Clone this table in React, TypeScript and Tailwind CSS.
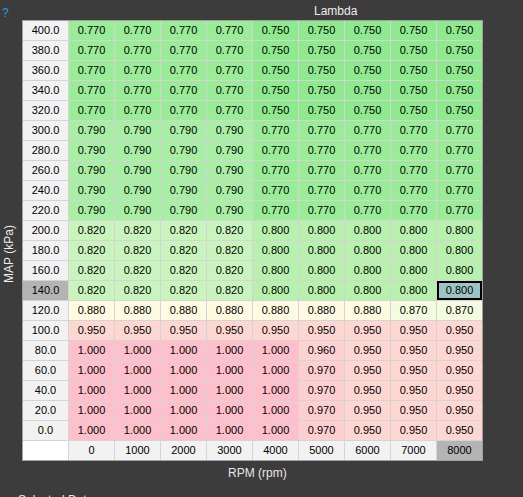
const mapRows = [400, 380, 360, 340, 320, 300, 280, 260, 240, 220, 200, 180, 160, 140, 120, 100, 80, 60, 40, 20, 0];
const rpms = [0, 1000, 2000, 3000, 4000, 5000, 6000, 7000, 8000];

const rowValues = (map: number): number[] => {
    if (map >= 320) return [0.77, 0.77, 0.77, 0.77, 0.75, 0.75, 0.75, 0.75, 0.75];
    if (map >= 220) return [0.79, 0.79, 0.79, 0.79, 0.77, 0.77, 0.77, 0.77, 0.77];
    if (map >= 140) return [0.82, 0.82, 0.82, 0.82, 0.8, 0.8, 0.8, 0.8, 0.8];
    if (map === 120) return [0.88, 0.88, 0.88, 0.88, 0.88, 0.88, 0.88, 0.87, 0.87];
    if (map === 100) return [0.95, 0.95, 0.95, 0.95, 0.95, 0.95, 0.95, 0.95, 0.95];
    if (map === 80) return [1, 1, 1, 1, 1, 0.96, 0.95, 0.95, 0.95];
    return [1, 1, 1, 1, 1, 0.97, 0.95, 0.95, 0.95];
};

// colour for each lambda value
const cellColor: Record<string, string> = {
    '0.750': 'bg-[#8fe98f]',
    '0.770': 'bg-[#9aec98]',
    '0.790': 'bg-[#a9eea5]',
    '0.800': 'bg-[#b8f1ae]',
    '0.820': 'bg-[#c9f4bd]',
    '0.870': 'bg-[#f3fcde]',
    '0.880': 'bg-[#fffbe2]',
    '0.950': 'bg-[#ffd7d2]',
    '0.960': 'bg-[#ffd2d2]',
    '0.970': 'bg-[#ffcfd0]',
    '1.000': 'bg-[#ffc0cb]',
};

export default function App() {
    const selRow = 140;
    const selCol = 8000;

    return (
        <div className="w-[523px] h-[497px] bg-[#3c3c3c] overflow-hidden font-['Liberation_Sans',Arial,sans-serif] text-[11px] text-black">
            <div className="flex h-[20px]">
                <div className="w-[22px] pl-[2px] pt-[7px] text-[12px] leading-[12px] text-[#3a9ad9]">?</div>
                <div className="pl-[292px] pt-[4px] text-[12px] leading-[14px] text-[#eeeeee]">Lambda</div>
            </div>

            <div className="flex">
                <div className="w-[22px] flex items-center justify-center pr-[5px] pt-[26px]">
                    <span className="-rotate-90 whitespace-nowrap text-[12px] text-[#eeeeee]">MAP (kPa)</span>
                </div>

                {/* Tableau */}
                <div className="grid grid-cols-[repeat(10,45px)] auto-rows-[19px] gap-px w-fit bg-[#d4d4d4] border border-[#a0a0a0]">
                    {mapRows.map((map) => (
                        <div key={map} className="contents">
                            <div className={`flex items-center justify-center ${map === selRow ? 'bg-[#b4b4b4]' : 'bg-[#f2f2f2]'}`}>
                                {map.toFixed(1)}
                            </div>
                            {rowValues(map).map((v, i) => {
                                const txt = v.toFixed(3);
                                const selected = map === selRow && rpms[i] === selCol;
                                return (
                                    <div
                                        key={i}
                                        className={`flex items-center justify-center ${selected ? 'bg-[#9cc6c4] border-2 border-black' : cellColor[txt]}`}
                                    >
                                        {txt}
                                    </div>
                                );
                            })}
                        </div>
                    ))}
                    <div className="bg-white" />
                    {rpms.map((r) => (
                        <div key={r} className={`flex items-center justify-center ${r === selCol ? 'bg-[#b4b4b4]' : 'bg-[#f2f2f2]'}`}>
                            {r}
                        </div>
                    ))}
                </div>
            </div>

            <div className="pl-[228px] pt-[5px] text-[12px] leading-[14px] text-[#e6e6e6]">RPM (rpm)</div>
            <div className="pl-[18px] pt-[13px] text-[12px] leading-[14px] text-[#e6e6e6]">Selected Data</div>
        </div>
    );
}
